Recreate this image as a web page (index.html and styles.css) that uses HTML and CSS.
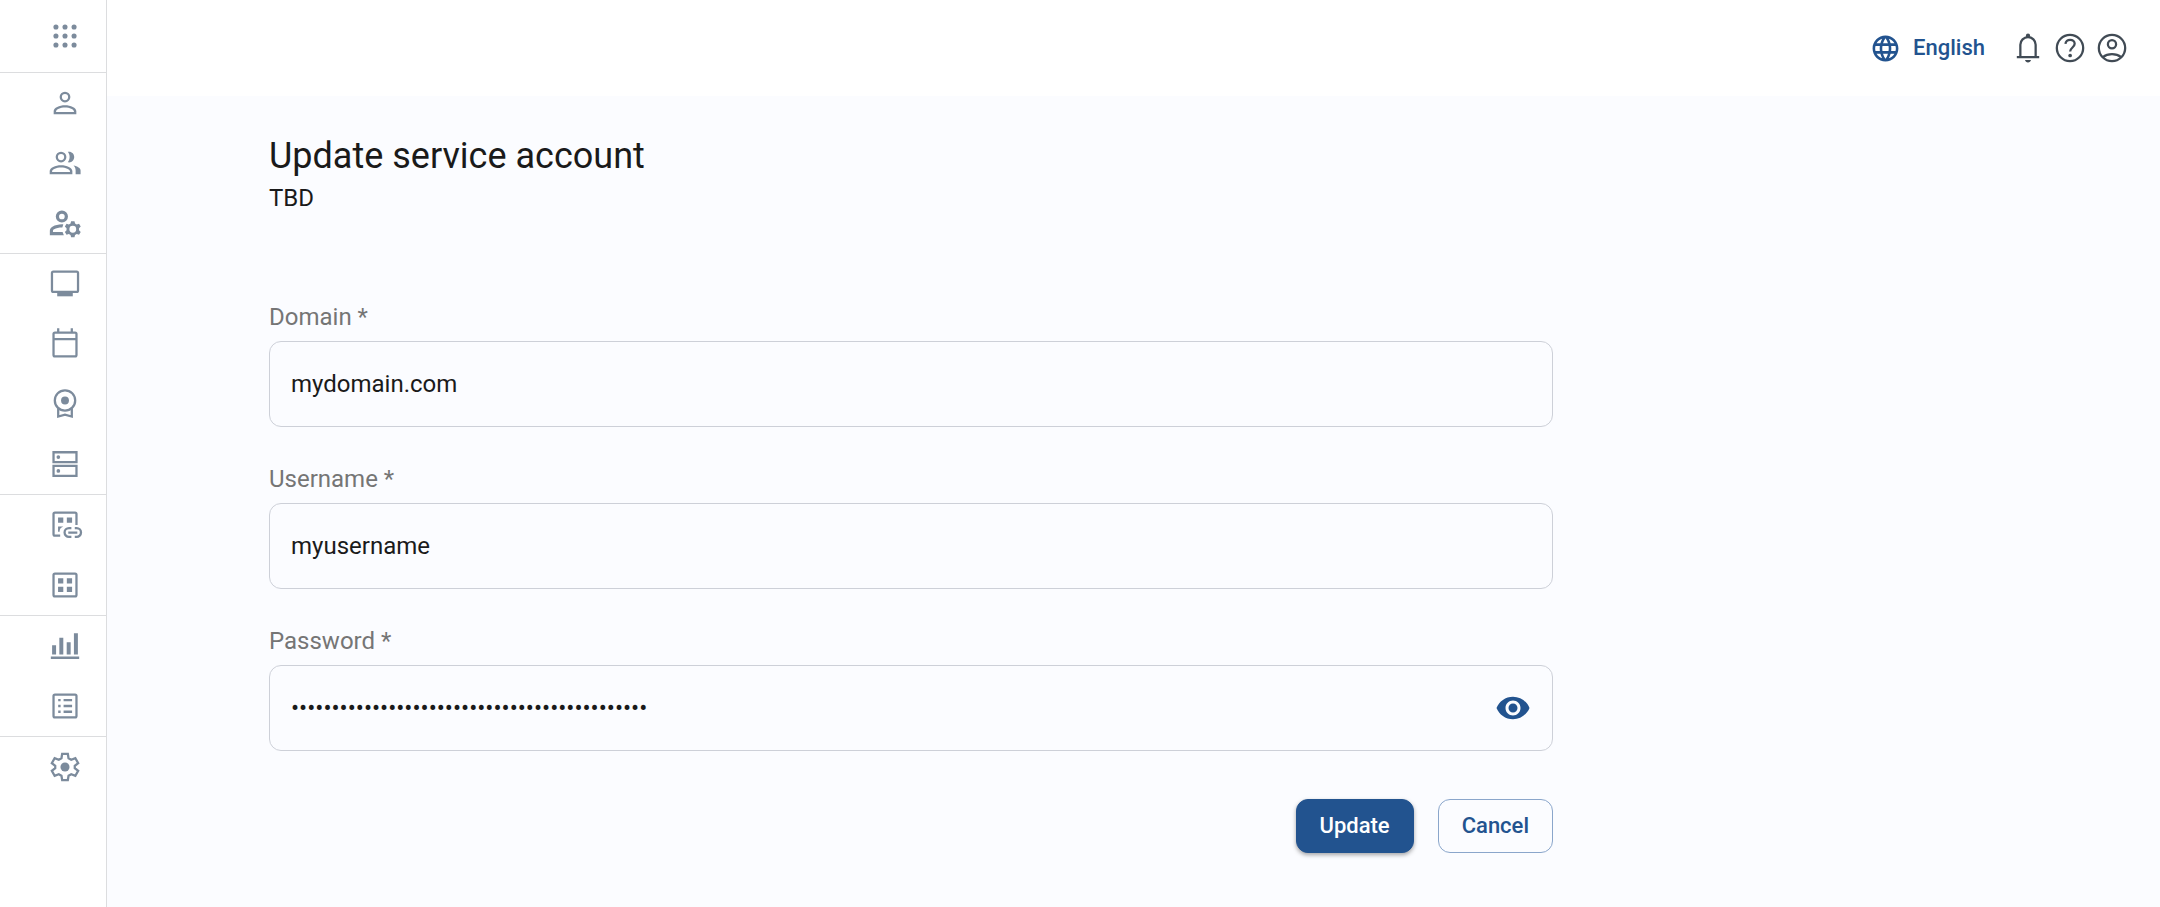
FILE: index.html
```html
<!DOCTYPE html>
<html lang="en">
<head>
<meta charset="utf-8">
<title>Update service account</title>
<link rel="stylesheet" href="styles.css">
</head>
<body>
<div class="app">
  <nav class="sidebar" aria-label="Main">
    <div class="nav-group nav-top">
      <button class="nav-item" type="button" aria-label="Apps"><svg class="icon" viewBox="0 0 24 24"><circle cx="5.6" cy="5.6" r="1.8"/><circle cx="12" cy="5.6" r="1.8"/><circle cx="18.4" cy="5.6" r="1.8"/><circle cx="5.6" cy="12" r="1.8"/><circle cx="12" cy="12" r="1.8"/><circle cx="18.4" cy="12" r="1.8"/><circle cx="5.6" cy="18.4" r="1.8"/><circle cx="12" cy="18.4" r="1.8"/><circle cx="18.4" cy="18.4" r="1.8"/></svg></button>
    </div>
    <div class="nav-group">
      <a class="nav-item" href="#user" aria-label="User"><svg class="icon" viewBox="0 0 24 24"><path d="M12 5.600a2.200 2.200 0 1 1 0 4.400 2.200 2.200 0 0 1 0-4.400m0-1.600a3.800 3.800 0 1 0 0 7.600 3.800 3.800 0 0 0 0-7.600zm0 9.500c-4 0-8 1.700-8 4.300V20h16v-2.200c0-2.600-4-4.300-8-4.300zm6.300 4.900H5.700v-.6c0-1.200 3-2.700 6.300-2.700s6.300 1.500 6.300 2.700z"/></svg></a>
      <a class="nav-item" href="#groups" aria-label="Groups"><svg class="icon" viewBox="0 0 24 24"><path d="M9.200 5.600a2.200 2.200 0 1 1 0 4.400 2.200 2.200 0 0 1 0-4.400m0-1.600a3.800 3.800 0 1 0 0 7.600 3.800 3.800 0 0 0 0-7.600zm0 9.500C5.200 13.500 1.200 15.200 1.200 17.700V20h16v-2.300c0-2.500-4-4.200-8-4.200zm6.300 4.900H2.900v-.7c0-1.200 3-2.600 6.300-2.600s6.300 1.400 6.300 2.600zM14 11.500c2.600.5 4.500-1.300 4.500-3.700S16.600 3.600 14 4.100c1.700 2.200 1.700 5.200 0 7.400zM18 13.800c1 .9 1.500 2 1.500 3.500V20H23v-2.700c0-1.700-2.200-2.900-5-3.500z"/></svg></a>
      <a class="nav-item" href="#roles" aria-label="Roles"><svg class="icon" viewBox="0 0 24 24"><path fill-rule="evenodd" d="M9.800 3.100a4.300 4.300 0 1 0 0 8.600 4.300 4.300 0 0 0 0-8.600zm0 2.300a2 2 0 1 1 0 4 2 2 0 0 1 0-4zM10.800 13c-2.900-.2-5.400.5-7.700 1.600-1.100.6-1.800 1.700-1.800 2.900v3.100h9.900l-.9-2.300H3.500v-.8c0-.5.300-.9.800-1.100 1.600-.8 3.200-1.200 5.800-1.200zM16.300 10.700h2.400l.4 1.700 1.200.6 1.600-.5 1.200 2-1.200 1.200v1.400l1.200 1.200-1.200 2-1.600-.5-1.200.6-.4 1.700h-2.400l-.4-1.700-1.200-.6-1.600.5-1.200-2 1.200-1.200v-1.400l-1.200-1.200 1.200-2 1.600.5 1.200-.6zm1.200 3.300a2.400 2.400 0 1 0 0 4.800 2.400 2.400 0 0 0 0-4.800z"/></svg></a>
    </div>
    <div class="nav-group">
      <a class="nav-item" href="#desktops" aria-label="Desktops"><svg class="icon" viewBox="0 0 24 24"><rect class="line" x="2.800" y="3.300" width="18.400" height="14.200" rx="1"/><path d="M6.500 17.500h11v3.200h-11z"/></svg></a>
      <a class="nav-item" href="#calendar" aria-label="Calendar"><svg class="icon" viewBox="0 0 24 24"><path class="line" d="M3.900 4.900a1 1 0 0 1 1-1h14.200a1 1 0 0 1 1 1v14.900a1 1 0 0 1-1 1H4.900a1 1 0 0 1-1-1zM3.900 8.600h16.200M7.200 3.900V.8M16.800 3.900V.8"/></svg></a>
      <a class="nav-item" href="#licenses" aria-label="Licenses"><svg class="icon" viewBox="0 0 24 24"><circle class="line" cx="12" cy="9.500" r="7.200"/><circle cx="12" cy="9.500" r="2.800"/><path class="line" d="M7.200 15v5.900l4.800-1.400 4.800 1.400V15"/></svg></a>
      <a class="nav-item" href="#servers" aria-label="Servers"><svg class="icon" viewBox="0 0 24 24"><path class="line" d="M3.900 3.700h16.200v6.900H3.900zM3.900 13.400h16.200v7H3.900z"/><circle cx="7.300" cy="7.100" r="1.300"/><circle cx="7.300" cy="16.900" r="1.300"/></svg></a>
    </div>
    <div class="nav-group">
      <a class="nav-item" href="#linked-apps" aria-label="Linked applications"><svg class="icon" viewBox="0 0 24 24"><path class="line" d="M20.100 12V4.200a1 1 0 0 0-1-1H4.900a1 1 0 0 0-1 1v14.300a1 1 0 0 0 1 1h3.700"/><path d="M7.100 6.700h3.700v3.700H7.100zM13.300 6.700H17v3.700h-3.700zM7.100 13h3.700c-2 .8-2.600 1.700-2.600 3.700H7.100z"/><path class="line" d="M16.500 14.200h-1.700a3.100 3.100 0 0 0 0 6.200h1.700M18.900 14.200h1.300a3.100 3.100 0 0 1 0 6.200h-1.300M14.300 17.300h6.400"/></svg></a>
      <a class="nav-item" href="#apps" aria-label="Applications"><svg class="icon" viewBox="0 0 24 24"><rect class="line" x="3.900" y="3.900" width="16.200" height="16.200" rx="1"/><path d="M7.100 7.200h3.700v3.700H7.100zM13.300 7.200H17v3.700h-3.700zM7.100 13.300h3.700V17H7.100zM13.300 13.300H17V17h-3.700z"/></svg></a>
    </div>
    <div class="nav-group">
      <a class="nav-item" href="#analytics" aria-label="Analytics"><svg class="icon" viewBox="0 0 24 24"><path d="M2 19.400h20v1.700H2zM2.900 11.500h2.800V18H2.900zM8 6.200h2.800V18H8zM13.200 9.400H16V18h-2.800zM18.300 3h2.800v15h-2.800z"/></svg></a>
      <a class="nav-item" href="#logs" aria-label="Logs"><svg class="icon" viewBox="0 0 24 24"><rect class="line" x="3.900" y="3.900" width="16.200" height="16.200" rx="1"/><path d="M7.200 7h1.700v1.700H7.200zM11 7h6v1.700h-6zM7.200 11.100h1.700v1.700H7.200zM11 11.100h6v1.700h-6zM7.200 15.200h1.700v1.700H7.200zM11 15.200h6v1.700h-6z"/></svg></a>
    </div>
    <div class="nav-group">
      <a class="nav-item" href="#settings" aria-label="Settings"><svg class="icon" viewBox="0 0 24 24"><path class="line" d="M10 2.800h4l.5 3 1.900 1.100 2.900-1.100 2 3.500-2.400 1.900v1.600l2.400 1.900-2 3.500-2.900-1.100-1.900 1.100-.5 3h-4l-.5-3-1.900-1.100-2.900 1.100-2-3.500 2.400-1.900v-1.600L2.700 9.300l2-3.500 2.900 1.100 1.900-1.100z"/><circle cx="12" cy="12" r="3.200"/></svg></a>
    </div>
  </nav>
  <div class="page">
    <header class="topbar">
      <button class="language" type="button"><svg class="icon-globe" viewBox="0 0 24 24"><path d="M11.990 2C6.470 2 2 6.480 2 12s4.470 10 9.990 10C17.520 22 22 17.520 22 12S17.520 2 11.990 2m6.930 6h-2.950c-.32-1.250-.78-2.450-1.380-3.560 1.840.63 3.370 1.910 4.330 3.560M12 4.040c.83 1.200 1.480 2.530 1.910 3.960h-3.820c.43-1.430 1.080-2.760 1.910-3.960M4.260 14C4.100 13.360 4 12.690 4 12s.1-1.360.26-2h3.380c-.08.660-.14 1.320-.14 2s.06 1.340.14 2zm.82 2h2.950c.32 1.250.78 2.450 1.380 3.560-1.840-.63-3.370-1.900-4.330-3.560m2.950-8H5.080c.96-1.660 2.490-2.930 4.330-3.560C8.810 5.550 8.350 6.750 8.030 8M12 19.960c-.83-1.200-1.480-2.530-1.910-3.960h3.820c-.43 1.430-1.080 2.760-1.910 3.960M14.340 14H9.660c-.09-.66-.16-1.320-.16-2s.07-1.350.16-2h4.680c.09.650.16 1.320.16 2s-.07 1.340-.16 2m.25 5.560c.6-1.110 1.060-2.310 1.380-3.560h2.950c-.96 1.650-2.490 2.930-4.330 3.560M16.360 14c.08-.66.14-1.320.14-2s-.06-1.340-.14-2h3.380c.16.640.26 1.310.26 2s-.1 1.360-.26 2z"/></svg>English</button>
      <div class="tools">
        <button class="tool" type="button" aria-label="Notifications"><svg class="icon" viewBox="0 0 24 24"><path class="line" d="M4.100 18.500h15.800M6.600 18.500V9.700a5.400 5.400 0 0 1 10.800 0v8.800"/><path d="M10.500 4.600V3.300a1.500 1.500 0 0 1 3 0v1.300zM9.900 20.500h4.200c-.2.900-1 1.700-2.100 1.700s-1.900-.8-2.100-1.700z"/></svg></button>
        <button class="tool" type="button" aria-label="Help"><svg class="icon" viewBox="0 0 24 24"><circle class="line" cx="12" cy="12" r="9.300"/><path class="line" d="M8.800 9.100c.1-1.700 1.500-2.900 3.300-2.900s3.200 1.100 3.200 2.800c0 2.600-3.200 2.700-3.200 5.500"/><circle cx="12.100" cy="17.300" r="1.300"/></svg></button>
        <button class="tool" type="button" aria-label="Account"><svg class="icon" viewBox="0 0 24 24"><circle class="line" cx="12" cy="12" r="9.300"/><circle class="line" cx="12" cy="9.300" r="2.900"/><path class="line" d="M5.500 18.500c3.600-2.800 9.400-2.800 13 0"/></svg></button>
      </div>
    </header>
    <main class="content">
      <h1 class="title">Update service account</h1>
      <p class="subtitle">TBD</p>
      <form class="form">
        <div class="field">
          <label class="label" for="domain">Domain *</label>
          <div class="box"><input class="input" id="domain" type="text" value="mydomain.com"></div>
        </div>
        <div class="field">
          <label class="label" for="username">Username *</label>
          <div class="box"><input class="input" id="username" type="text" value="myusername"></div>
        </div>
        <div class="field">
          <label class="label" for="password">Password *</label>
          <div class="box"><input class="input" id="password" type="password" value="abcdefghijklmnopqrstuvwxyzabcdefghijklmnopqr"><button class="reveal" type="button" aria-label="Show password"><svg class="icon-eye" viewBox="0 0 24 24"><path d="M12 4.500C7 4.500 2.730 7.610 1 12c1.730 4.390 6 7.500 11 7.500s9.270-3.110 11-7.500c-1.730-4.390-6-7.500-11-7.500M12 17c-2.760 0-5-2.240-5-5s2.240-5 5-5 5 2.240 5 5-2.240 5-5 5m0-8c-1.660 0-3 1.340-3 3s1.340 3 3 3 3-1.340 3-3-1.340-3-3-3"/></svg></button></div>
        </div>
        <div class="actions">
          <button class="button primary" type="submit">Update</button>
          <button class="button" type="button">Cancel</button>
        </div>
      </form>
    </main>
  </div>
</div>
</body>
</html>
```
FILE: styles.css
```css
*,
*::before,
*::after {
  box-sizing: border-box;
}

body {
  margin: 0;
  background: #fbfcff;
  color: #1a1a1a;
  font-family: Roboto, "Liberation Sans", sans-serif;
  font-size: 24px;
  line-height: 28px;
}

button,
input {
  margin: 0;
  padding: 0;
  border: 0;
  background: none;
  color: inherit;
  font: inherit;
}

button {
  cursor: pointer;
}

svg {
  display: block;
  fill: currentColor;
}

.line {
  fill: none;
  stroke: currentColor;
  stroke-width: 1.6;
}

.app {
  display: flex;
  min-height: 100vh;
}

.sidebar {
  flex: none;
  width: 107px;
  border-right: 1px solid #dcdddf;
  background: #fff;
  color: #7c8b9c;
}

.nav-group + .nav-group {
  border-top: 1px solid #dcdddf;
}

.nav-item {
  display: flex;
  align-items: center;
  width: 100%;
  height: 60px;
  padding-left: 48px;
  color: inherit;
}

.nav-top .nav-item {
  height: 72px;
}

.icon {
  width: 34px;
  height: 34px;
  overflow: visible;
}

.page {
  flex: 1;
  min-width: 0;
}

.topbar {
  display: flex;
  align-items: center;
  justify-content: flex-end;
  gap: 26px;
  height: 96px;
  padding-right: 31px;
  background: #fff;
  color: #414b55;
}

.language {
  display: flex;
  align-items: center;
  gap: 12px;
  color: #22538f;
  font-size: 22px;
  font-weight: 500;
}

.icon-globe {
  width: 31px;
  height: 31px;
}

.tools {
  display: flex;
  gap: 8px;
}

.content {
  max-width: 1608px;
  padding: 36px 162px 48px;
}

.title {
  margin: 0;
  font-size: 36px;
  font-weight: 400;
  line-height: 48px;
}

.subtitle {
  margin: 4px 0 91px;
}

.form {
  display: grid;
  gap: 38px;
}

.field {
  display: grid;
  gap: 10px;
}

.label {
  color: #757575;
}

.box {
  display: flex;
  align-items: center;
  height: 86px;
  padding: 0 21px;
  border: 1px solid #cdd0d8;
  border-radius: 12px;
}

.input {
  flex: 1;
  min-width: 0;
  height: 100%;
  outline: 0;
}

.reveal {
  color: #22538f;
}

.icon-eye {
  width: 36px;
  height: 36px;
}

.actions {
  display: flex;
  justify-content: flex-end;
  gap: 24px;
  margin-top: 10px;
}

.button {
  height: 54px;
  padding: 0 23px;
  border: 1px solid #8aa6cb;
  border-radius: 12px;
  color: #22538f;
  font-size: 22px;
  font-weight: 500;
}

.primary {
  border-color: #22538f;
  background: #22538f;
  box-shadow: 0 2px 4px rgba(0, 0, 0, 0.35);
  color: #fff;
}
```
